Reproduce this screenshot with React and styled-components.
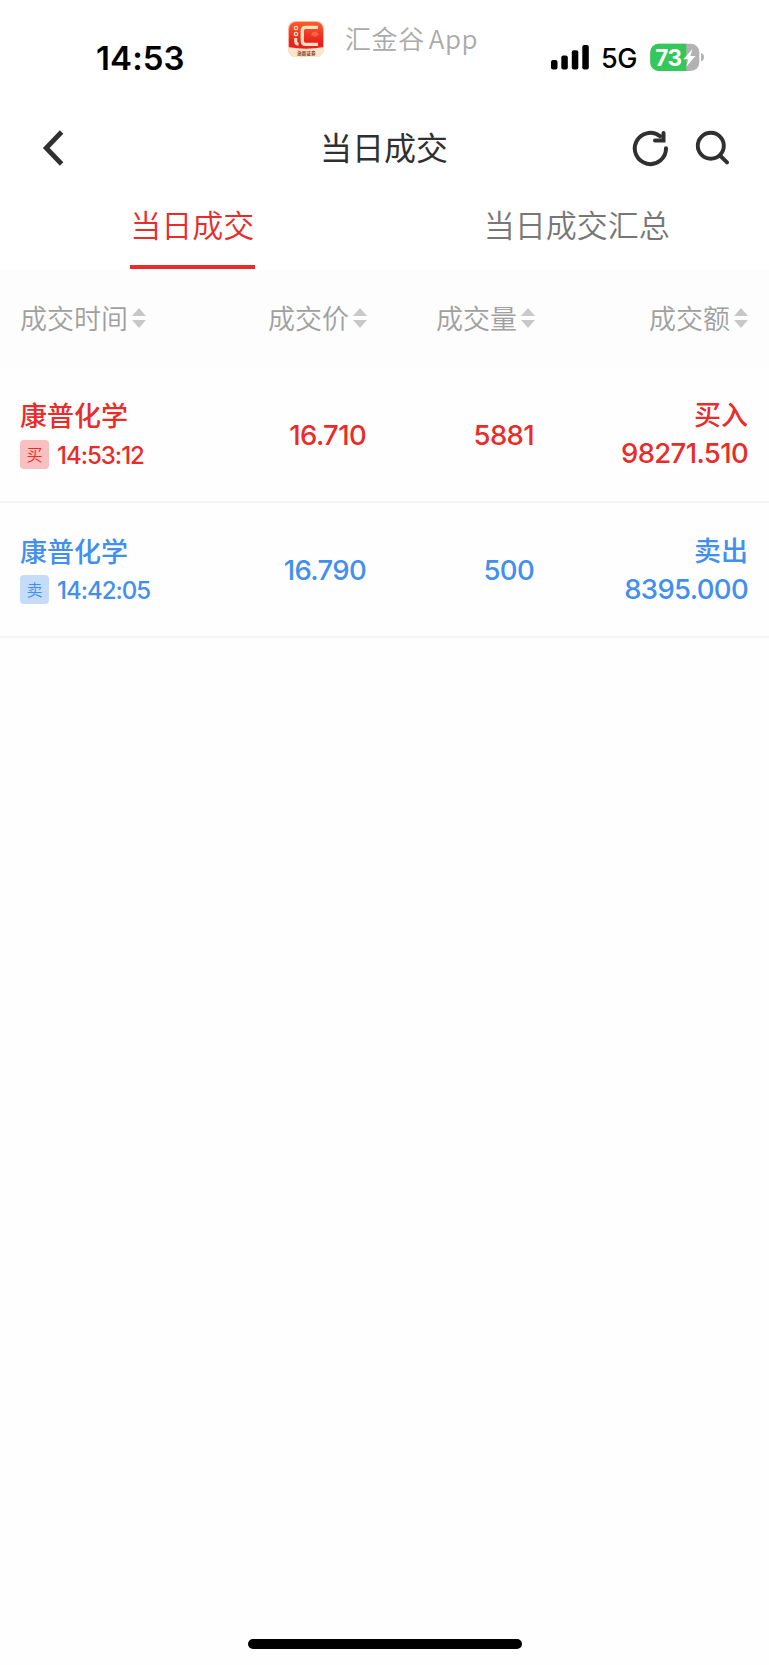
import React from "react";
import styled, { createGlobalStyle } from "styled-components";

const colors = {
  buy: "#e92b29",
  buyTag: "#f9bfc1",
  sell: "#418fee",
  sellTag: "#c5dcf8",
  dark: "#303030",
  tab: "#777777",
  head: "#a0a0a0",
  sort: "#c8c8c8",
  line: "#f5f5f5",
};

const cjk = `"Noto Sans CJK SC", sans-serif`;
const latin = `Inter, "Noto Sans CJK SC", sans-serif`;

const GlobalStyle = createGlobalStyle`
  * {
    box-sizing: border-box;
  }

  body {
    margin: 0;
    background: #ffffff;
    font-family: ${cjk};
  }
`;

const Screen = styled.div`
  display: flex;
  flex-direction: column;
  height: 1665px;
  background: #ffffff;
`;

const StatusBar = styled.header`
  display: grid;
  grid-template-columns: 288px 1fr 218px;
  height: 96px;
`;

const Clock = styled.div`
  padding: 37.5px 0 0 96px;
  font: 600 33px/40px ${latin};
  letter-spacing: 0.1px;
  color: #000000;
`;

const Brand = styled.div`
  display: flex;
  align-items: flex-start;
  padding-top: 21px;

  svg {
    display: block;
  }
`;

const BrandName = styled.span`
  margin: -2px 0 0 21px;
  font: 350 26px/38px ${cjk};
  letter-spacing: 0.6px;
  word-spacing: -2.5px;
  color: #aaaaaa;
  white-space: pre;
`;

const StatusIcons = styled.div`
  display: flex;
  align-items: flex-start;
  padding-top: 43px;

  svg {
    display: block;
  }
`;

const Network = styled.span`
  width: 48px;
  padding: 0 0 0 11px;
  font: 500 27px/31px ${latin};
  letter-spacing: -0.5px;
  color: #000000;
`;

const TitleBar = styled.div`
  display: grid;
  grid-template-columns: 200px 1fr 200px;
  align-items: center;
  height: 104px;

  svg {
    display: block;
  }
`;

const Back = styled.div`
  padding-left: 42px;
`;

const Title = styled.h1`
  margin: 0;
  padding: 0 1px 4px 0;
  text-align: center;
  font: 400 32px/48px ${cjk};
  color: ${colors.dark};
`;

const Actions = styled.div`
  display: flex;
  justify-content: flex-end;
  gap: 26px;
  padding-right: 39px;
`;

const Tabs = styled.nav`
  display: flex;
  height: 69px;
`;

const Tab = styled.div`
  display: flex;
  flex: 1;
  justify-content: center;

  span {
    height: 69px;
    padding: 1px 0.5px 0;
    font: 350 31px/46px ${cjk};
    color: ${({ $active }) => ($active ? colors.buy : colors.tab)};
    border-bottom: 4px solid ${({ $active }) => ($active ? colors.buy : "transparent")};
  }
`;

const Table = styled.main`
  flex: 1;
  background: #fefefe;
`;

const Row = styled.div`
  display: grid;
  grid-template-columns: 180px 166px 168px 1fr;
  align-items: center;
  padding: 0 21px 0 20px;
`;

const HeadRow = styled(Row)`
  height: 98px;
  background: #fdfdfd;
`;

const HeadCell = styled.div`
  display: flex;
  align-items: center;
  justify-content: ${({ $left }) => ($left ? "flex-start" : "flex-end")};
  gap: 4px;
  margin-right: ${({ $flush }) => ($flush ? 0 : "-1px")};
  padding-bottom: 1px;
  font: 350 27px/40px ${cjk};
  color: ${colors.head};

  svg {
    display: block;
  }
`;

const TradeRow = styled(Row)`
  height: 135.5px;
  border-bottom: 2px solid ${colors.line};
  color: ${({ $side }) => colors[$side]};
`;

const Stock = styled.div`
  display: flex;
  flex-direction: column;
  gap: 6px;
  padding-bottom: 1px;
`;

const Name = styled.div`
  font: 500 27px/36px ${cjk};
`;

const Stamp = styled.div`
  display: flex;
  align-items: center;
  gap: 8px;
  height: 30px;
  font: 500 24px/30px ${latin};
  letter-spacing: -1px;
`;

const Time = styled.span`
  padding-top: 3px;
`;

const Tag = styled.span`
  width: 29px;
  height: 29px;
  border-radius: 4px;
  background: ${({ $side }) => colors[`${$side}Tag`]};
  text-align: center;
  font: 350 16px/29px ${cjk};
  letter-spacing: 0;
`;

const Num = styled.div`
  padding-top: 2px;
  text-align: right;
  font: 500 27.5px/36px ${latin};
  letter-spacing: -0.65px;
`;

const Amount = styled.div`
  display: flex;
  flex-direction: column;
  gap: 1px;
  text-align: right;
`;

const HomeBar = styled.footer`
  display: flex;
  justify-content: center;
  height: 26px;
  background: #fefefe;

  &::before {
    content: "";
    width: 274px;
    height: 10px;
    border-radius: 5px;
    background: #000000;
  }
`;

const BrandIcon = () => (
  <svg width="36" height="37" viewBox="0 0 36 37">
    <defs>
      <linearGradient id="brandRed" x1="0" y1="0" x2="0" y2="1">
        <stop offset="0" stopColor="#ff5a2c" />
        <stop offset="0.6" stopColor="#e8201f" />
      </linearGradient>
      <clipPath id="brandClip">
        <rect width="36" height="36" rx="8" />
      </clipPath>
    </defs>
    <g clipPath="url(#brandClip)">
      <rect width="36" height="36" fill="#f9b7a0" />
      <rect x="1" y="1" width="34" height="34" rx="7" fill="url(#brandRed)" />
      <path d="M0 26 Q18 29.5 36 26 V37 H0Z" fill="#fbe6cb" />
    </g>
    <circle cx="8" cy="7" r="1.7" fill="none" stroke="#fbd9b4" strokeWidth="1.3" />
    <circle cx="8" cy="13" r="1.7" fill="none" stroke="#fbd9b4" strokeWidth="1.3" />
    <path d="M7.7 17 V20.5 Q7.7 23 10.5 23.2" fill="none" stroke="#fbe3c0" strokeWidth="3" />
    <path d="M30 6.3 H17.5 Q14.3 6.3 14.3 9.5 V20 Q14.3 23.3 17.5 23.3 H30" fill="none" stroke="#fbe3c0" strokeWidth="3.3" />
    <path d="M23.5 13.5 q0-2.5 2.5-2.5 q2.5-1.5 3.5 1 q2 1.8-.5 2.8 l-2 1.3 q-1-1.5-3.5-1.2z" fill="#fa6643" />
    <text x="18.3" y="33.6" textAnchor="middle" fontSize="4.7" fontWeight="700" fill="#7c3a1f" fontFamily="Noto Sans CJK SC">浙商证券</text>
  </svg>
);

const Signal = () => (
  <svg width="39" height="28" viewBox="0 0 39 28">
    <rect x="0" y="17" width="6.5" height="9.5" rx="2" />
    <rect x="10.3" y="12.5" width="6.5" height="14" rx="2" />
    <rect x="20.8" y="7.3" width="6.5" height="19.2" rx="2" />
    <rect x="31.3" y="2" width="6.5" height="24.5" rx="2" />
  </svg>
);

const BatterySvg = styled.svg`
  margin-left: 12px;
`;

const Battery = () => (
  <BatterySvg width="56" height="29" viewBox="0 0 56 29">
    <defs>
      <clipPath id="batteryClip">
        <rect x="0.3" y="0.7" width="49" height="27.3" rx="8.5" />
      </clipPath>
    </defs>
    <g clipPath="url(#batteryClip)">
      <rect width="50" height="29" fill="#b2b2b2" />
      <rect width="36.3" height="29" fill="#34c759" />
    </g>
    <path d="M51 10 Q54 11 54 14.2 Q54 17.3 51 18.5Z" fill="#b2b2b2" />
    <text x="5.3" y="22.5" fontSize="22.5" fontWeight="700" fill="#ffffff" fontFamily="Inter" letterSpacing="-0.5">73</text>
    <path d="M42.5 6 L33.3 16.3 H38.4 L36.3 23.8 L45.5 13 H40.4Z" fill="#ffffff" />
  </BatterySvg>
);

const BackIcon = () => (
  <svg width="24" height="36" viewBox="0 0 24 36" fill="none" stroke={colors.dark} strokeWidth="4.8">
    <path d="M19.6 2 L4.2 18 L19.6 34" />
  </svg>
);

const RefreshIcon = () => (
  <svg width="37" height="37" viewBox="0 0 37 37" fill="none" stroke={colors.dark} strokeWidth="4" strokeLinecap="round" strokeLinejoin="round">
    <path d="M34 18.2 A15.6 15.6 0 1 1 28 6.2" />
    <path d="M31.5 3 V10.6 H23" strokeLinejoin="miter" />
  </svg>
);

const SearchIcon = () => (
  <svg width="35" height="35" viewBox="0 0 35 35" fill="none" stroke={colors.dark} strokeWidth="3.9" strokeLinecap="round">
    <circle cx="15.8" cy="15.7" r="13" />
    <path d="M25.5 26 L32 32.4" />
  </svg>
);

const SortIcon = () => (
  <svg width="14" height="20" viewBox="0 0 14 20" fill={colors.sort}>
    <path d="M7 0 L14 8 H0Z" />
    <path d="M0 12 H14 L7 20Z" />
  </svg>
);

const headings = ["成交时间", "成交价", "成交量", "成交额"];

const trades = [
  { side: "buy", tag: "买", name: "康普化学", time: "14:53:12", price: "16.710", qty: "5881", label: "买入", amount: "98271.510" },
  { side: "sell", tag: "卖", name: "康普化学", time: "14:42:05", price: "16.790", qty: "500", label: "卖出", amount: "8395.000" },
];

const Trade = ({ trade }) => (
  <TradeRow $side={trade.side}>
    <Stock>
      <Name>{trade.name}</Name>
      <Stamp>
        <Tag $side={trade.side}>{trade.tag}</Tag>
        <Time>{trade.time}</Time>
      </Stamp>
    </Stock>
    <Num>{trade.price}</Num>
    <Num>{trade.qty}</Num>
    <Amount>
      <Name>{trade.label}</Name>
      <Num>{trade.amount}</Num>
    </Amount>
  </TradeRow>
);

const App = () => (
  <>
    <GlobalStyle />
    <Screen>
      <StatusBar>
        <Clock>14:53</Clock>
        <Brand>
          <BrandIcon />
          <BrandName>汇金谷 App</BrandName>
        </Brand>
        <StatusIcons>
          <Signal />
          <Network>5G</Network>
          <Battery />
        </StatusIcons>
      </StatusBar>
      <TitleBar>
        <Back>
          <BackIcon />
        </Back>
        <Title>当日成交</Title>
        <Actions>
          <RefreshIcon />
          <SearchIcon />
        </Actions>
      </TitleBar>
      <Tabs>
        <Tab $active>
          <span>当日成交</span>
        </Tab>
        <Tab>
          <span>当日成交汇总</span>
        </Tab>
      </Tabs>
      <Table>
        <HeadRow>
          {headings.map((text, idx) => (
            <HeadCell key={text} $left={idx === 0} $flush={idx === 3}>
              {text}
              <SortIcon />
            </HeadCell>
          ))}
        </HeadRow>
        {trades.map((trade) => (
          <Trade key={trade.time} trade={trade} />
        ))}
      </Table>
      <HomeBar />
    </Screen>
  </>
);

export default App;
